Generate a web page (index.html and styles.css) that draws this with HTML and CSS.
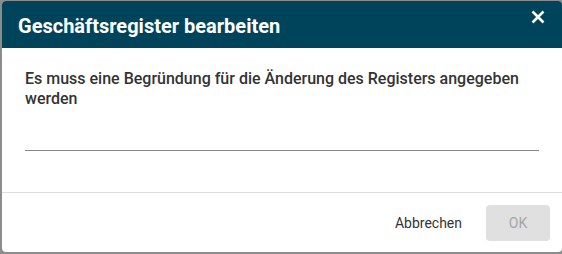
FILE: index.html
```html
<!DOCTYPE html>
<html lang="de">
<head>
<meta charset="utf-8">
<title>Geschäftsregister bearbeiten</title>
<link rel="stylesheet" href="styles.css">
</head>
<body>
<div class="dialog">
  <div class="dialog-header">
    <h1 class="dialog-title">Geschäftsregister bearbeiten</h1>
    <button class="close-btn" aria-label="Schließen">
      <svg width="14" height="14" viewBox="0 0 14 14"><path d="M1.5 1.5 L12.5 12.5 M12.5 1.5 L1.5 12.5" stroke="#fff" stroke-width="2.5" stroke-linecap="butt"/></svg>
    </button>
  </div>
  <div class="dialog-body">
    <p class="message">Es muss eine Begründung für die Änderung des Registers angegeben werden</p>
    <div class="field"></div>
  </div>
  <div class="dialog-footer">
    <button class="btn btn-text">Abbrechen</button>
    <button class="btn btn-disabled" disabled>OK</button>
  </div>
</div>
</body>
</html>
```
FILE: styles.css
```css
html, body {
  margin: 0;
  padding: 0;
}
body {
  background: #8c8c8c;
  font-family: Roboto, "Liberation Sans", sans-serif;
  width: 562px;
  height: 254px;
  overflow: hidden;
}
.dialog {
  margin: 1px 0 0 2px;
  width: 560px;
  height: 251px;
  background: #fff;
  border-radius: 4px;
  overflow: hidden;
  display: flex;
  flex-direction: column;
}
.dialog-header {
  height: 47px;
  background: #00445c;
  display: flex;
  align-items: center;
  justify-content: space-between;
  padding: 0 17px 0 16px;
  flex-shrink: 0;
}
.dialog-title {
  margin: 0;
  color: #fff;
  font-size: 20px;
  font-weight: 700;
  padding-top: 2px;
}
.close-btn {
  background: none;
  border: 0;
  padding: 0;
  width: 14px;
  height: 14px;
  margin-top: -15px;
  display: flex;
}
.dialog-body {
  padding: 21px 23px 0 23px;
  flex: 1;
  border-bottom: 1px solid #dddddd;
}
.message {
  margin: 0;
  font-size: 16px;
  line-height: 20px;
  font-weight: 500;
  color: #333333;
}
.field {
  height: 41px;
  border-bottom: 1px solid #888888;
}
.dialog-footer {
  height: 59px;
  display: flex;
  align-items: center;
  justify-content: flex-end;
  padding: 0 12px;
  gap: 8px;
  flex-shrink: 0;
}
.btn {
  font-family: Roboto, "Liberation Sans", sans-serif;
  font-size: 14px;
  height: 36px;
  border: 0;
  border-radius: 4px;
  padding: 0 16px;
  background: none;
  color: #333333;
}
.btn-disabled {
  width: 64px;
  background: #e0e0e0;
  color: #a6a6a6;
}
```
